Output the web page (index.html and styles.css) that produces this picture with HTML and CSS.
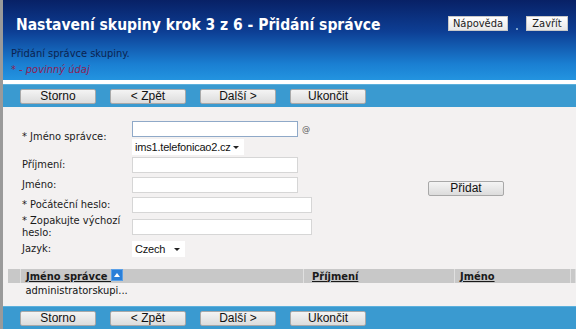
FILE: index.html
```html
<!DOCTYPE html>
<html lang="cs">
<head>
    <meta charset="UTF-8">
    <title>Nastavení skupiny krok 3 z 6 - Přidání správce</title>
    <link rel="stylesheet" href="styles.css">
</head>
<body>
    <div class="page">
        <div class="header">
            <div class="header-top">
                <h1>Nastavení skupiny krok 3 z 6 - Přidání správce</h1>
                <div class="header-links">
                    <button class="btn-small help">Nápověda</button>
                    <span class="sep"></span>
                    <button class="btn-small close">Zavřít</button>
                </div>
            </div>
            <p class="intro">Přidání správce skupiny.</p>
            <p class="required">* - povinný údaj</p>
        </div>
        <div class="toolbar">
            <button class="btn">Storno</button>
            <button class="btn">&lt; Zpět</button>
            <button class="btn">Další &gt;</button>
            <button class="btn">Ukončit</button>
        </div>
        <div class="content">
            <div class="form-area">
                <div class="form">
                    <label>* Jméno správce:</label>
                    <div class="field stack">
                        <div class="inline"><input type="text" class="w165 focused"><span class="at">@</span></div>
                        <div class="select w111"><span>ims1.telefonicao2.cz</span><i class="arrow"></i></div>
                    </div>
                    <label>Příjmení:</label>
                    <div class="field"><input type="text" class="w165"></div>
                    <label>Jméno:</label>
                    <div class="field"><input type="text" class="w165"></div>
                    <label>* Počáteční heslo:</label>
                    <div class="field"><input type="password" class="w179"></div>
                    <label>* Zopakujte výchozí heslo:</label>
                    <div class="field"><input type="password" class="w179"></div>
                    <label>Jazyk:</label>
                    <div class="field"><div class="select w52"><span>Czech</span><i class="arrow"></i></div></div>
                </div>
                <div class="add">
                    <button class="btn">Přidat</button>
                </div>
            </div>
            <table class="list">
                <thead>
                    <tr>
                        <th class="c0"></th>
                        <th class="c1"><a href="#">Jméno správce </a><span class="sort"></span></th>
                        <th class="c2"><a href="#">Příjmení </a></th>
                        <th class="c3"><a href="#">Jméno </a></th>
                        <th class="c4"></th>
                    </tr>
                </thead>
                <tbody>
                    <tr>
                        <td></td>
                        <td class="name">administratorskupi...</td>
                        <td></td>
                        <td></td>
                        <td></td>
                    </tr>
                </tbody>
            </table>
        </div>
        <div class="toolbar">
            <button class="btn">Storno</button>
            <button class="btn">&lt; Zpět</button>
            <button class="btn">Další &gt;</button>
            <button class="btn">Ukončit</button>
        </div>
    </div>
</body>
</html>
```

FILE: styles.css
```css
body {
    margin: 0;
    font-family: "DejaVu Sans Condensed", "DejaVu Sans", Tahoma, sans-serif;
    font-stretch: condensed;
    font-size: 11px;
    background: #f3f1f1;
}
.page {
    border-left: 3px solid #9a9a9a;
    height: 329px;
    display: flex;
    flex-direction: column;
    overflow: hidden;
}
.header {
    flex: none;
    height: 84px;
    box-sizing: border-box;
    background: linear-gradient(to bottom, #082166 0%, #0d3f95 40%, #1a7fd2 80%, #2394e0 100%);
    padding: 0 0 0 8px;
    border-bottom: 4px solid #fff;
}
.header-top {
    display: flex;
    align-items: flex-start;
    justify-content: space-between;
    padding-top: 15px;
}
h1 {
    margin: 0 0 0 5px;
    color: #fff;
    font-size: 15.5px;
    font-weight: bold;
    line-height: 20px;
    white-space: nowrap;
}
.header-links {
    display: flex;
    align-items: center;
    padding-top: 1px;
    padding-right: 8px;
}
.sep {
    width: 2px;
    height: 2px;
    background: #7aa0c8;
    margin: 10px 8px 0 8px;
}
.btn-small {
    height: 15px;
    padding: 0;
    font-family: inherit;
    font-size: 11px;
    color: #1a1a1a;
    background: linear-gradient(to bottom, #ffffff, #e8e8e8);
    border: 1px solid #c8c8c8;
    line-height: 12px;
}
.help { width: 60px; }
.close { width: 42px; }
.intro {
    margin: 12px 0 0 0;
    color: #0b2350;
    line-height: 14px;
}
.required {
    margin: 2px 0 0 0;
    color: #8e2255;
    font-style: italic;
    line-height: 14px;
}
.toolbar {
    height: 23px;
    flex: none;
    background: #3a9ad0;
    border-top: 1px solid #5cb0dc;
    box-sizing: border-box;
    display: flex;
    align-items: center;
    gap: 14px;
    padding-left: 17px;
}
.btn {
    width: 76px;
    height: 15px;
    padding: 0;
    font-family: "Liberation Sans", Arial, sans-serif;
    font-size: 12px;
    color: #111;
    background: linear-gradient(to bottom, #f4f4f4, #dcdcdc);
    border: 1px solid #a8a8a8;
    border-radius: 2px;
    line-height: 13px;
}
.content {
    flex: 1;
    padding: 12px 0 0 5px;
}
.form-area {
    display: flex;
    align-items: center;
}
.form {
    display: grid;
    grid-template-columns: 110px 182px;
    align-items: center;
    padding-left: 14px;
}
.form label {
    color: #1a1a1a;
    line-height: 12px;
    padding-right: 6px;
}
.field {
    padding: 2px 0;
    display: flex;
    align-items: center;
}
.stack {
    flex-direction: column;
    align-items: flex-start;
    gap: 2px;
    padding-bottom: 0;
}
.inline {
    display: flex;
    align-items: center;
}
input {
    height: 16px;
    box-sizing: border-box;
    border: 1px solid #d6d6d6;
    background: #fff;
    margin: 0;
    padding: 0 2px;
}
.focused {
    border-color: #8fa9c8;
}
.w165 { width: 166px; }
.w179 { width: 180px; }
.at {
    margin-left: 4px;
    color: #555;
    font-size: 9px;
}
.select {
    height: 16px;
    box-sizing: border-box;
    background: #fff;
    display: flex;
    align-items: center;
    justify-content: space-between;
    padding: 0 5px 0 3px;
    font-family: "Liberation Sans", Arial, sans-serif;
    font-size: 11px;
    color: #111;
}
.select span {
    letter-spacing: -0.2px;
}
.w111 { width: 112px; }
.w52 { width: 53px; }
.arrow {
    width: 0;
    height: 0;
    border-left: 3px solid transparent;
    border-right: 3px solid transparent;
    border-top: 3px solid #222;
}
.add {
    margin-left: 114px;
    padding-bottom: 2px;
}
.list {
    margin-top: 10px;
    width: 568px;
    border-collapse: collapse;
}
.list th {
    background: #c8c8c8;
    height: 14px;
    padding: 0;
    text-align: left;
    border-right: 1px solid #e0e0e0;
}
.list th a {
    color: #1a1a1a;
    font-weight: bold;
}
.list td {
    padding: 2px 0 0 0;
    color: #111;
    line-height: 12px;
}
.list td.name {
    padding-left: 5px;
}
.c0 { width: 12px; }
.c1 { width: 277px; padding-left: 5px !important; }
.c2 { width: 142px; padding-left: 8px !important; }
.c3 { width: 110px; padding-left: 5px !important; }
.sort {
    display: inline-block;
    width: 10px;
    height: 10px;
    background: #2a7fd8;
    border: 1px solid #5aa0e8;
    vertical-align: -1px;
    position: relative;
}
.sort::after {
    content: "";
    position: absolute;
    left: 2px;
    top: 3px;
    border-left: 3px solid transparent;
    border-right: 3px solid transparent;
    border-bottom: 4px solid #fff;
}
```
